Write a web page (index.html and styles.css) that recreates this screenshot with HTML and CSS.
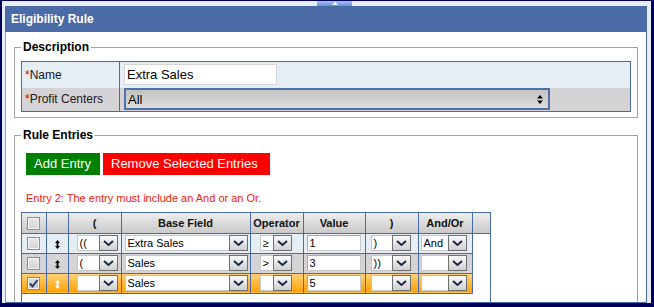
FILE: index.html
```html
<!DOCTYPE html>
<html>
<head>
<meta charset="utf-8">
<link rel="stylesheet" href="styles.css">
</head>
<body>
<div class="frame">
  <div class="topstrip"><div class="tab"><span class="tri"></span></div></div>
  <div class="panel">
    <div class="hdr">Eligibility Rule</div>
    <div class="pbody">
      <fieldset class="fs desc">
        <legend>Description</legend>
        <table class="dt">
          <tr class="r1">
            <td class="lbl"><span class="req">*</span>Name</td>
            <td class="fld"><div class="inp">Extra Sales</div></td>
          </tr>
          <tr class="r2">
            <td class="lbl"><span class="req">*</span>Profit Centers</td>
            <td class="fld"><div class="pc"><span>All</span><svg class="ud" width="6" height="9" viewBox="0 0 6 9"><polygon points="3,0 6,3.5 0,3.5" fill="#000"/><polygon points="0,5.5 6,5.5 3,9" fill="#000"/></svg></div></td>
          </tr>
        </table>
      </fieldset>
      <fieldset class="fs rules">
        <legend>Rule Entries</legend>
        <div class="btns"><span class="btn add">Add Entry</span><span class="btn rem">Remove Selected Entries</span></div>
        <div class="err">Entry 2: The entry must include an And or an Or.</div>
        <div class="rgrid">
        <table class="rt">
          <colgroup>
            <col class="w-chk"><col class="w-drag"><col class="w-lp"><col class="w-fld"><col class="w-op"><col class="w-val"><col class="w-rp"><col class="w-ao"><col class="w-end">
          </colgroup>
          <tr class="th">
            <th><span class="cb"></span></th><th></th><th>(</th><th>Base Field</th><th>Operator</th><th>Value</th><th>)</th><th>And/Or</th><th></th>
          </tr>
          <tr class="r1">
            <td class="c"><span class="cb"></span></td>
            <td class="c"><svg class="drag" width="5" height="9" viewBox="0 0 5 9"><polygon points="2.5,0 5,3 3.4,3 3.4,6 5,6 2.5,9 0,6 1.6,6 1.6,3 0,3" fill="#000"/></svg></td>
            <td><div class="dd lp"><span class="t">((</span><span class="b"><svg width="11" height="6" viewBox="0 0 11 6"><polyline points="1,1 5.5,5 10,1" fill="none" stroke="#1c2a4c" stroke-width="2"/></svg></span></div></td>
            <td><div class="dd fld"><span class="t">Extra Sales</span><span class="b"><svg width="11" height="6" viewBox="0 0 11 6"><polyline points="1,1 5.5,5 10,1" fill="none" stroke="#1c2a4c" stroke-width="2"/></svg></span></div></td>
            <td><div class="dd op"><span class="t">≥</span><span class="b"><svg width="11" height="6" viewBox="0 0 11 6"><polyline points="1,1 5.5,5 10,1" fill="none" stroke="#1c2a4c" stroke-width="2"/></svg></span></div></td>
            <td><div class="vi">1</div></td>
            <td><div class="dd rp"><span class="t">)</span><span class="b"><svg width="11" height="6" viewBox="0 0 11 6"><polyline points="1,1 5.5,5 10,1" fill="none" stroke="#1c2a4c" stroke-width="2"/></svg></span></div></td>
            <td><div class="dd ao"><span class="t">And</span><span class="b"><svg width="11" height="6" viewBox="0 0 11 6"><polyline points="1,1 5.5,5 10,1" fill="none" stroke="#1c2a4c" stroke-width="2"/></svg></span></div></td>
            <td class="blank"></td>
          </tr>
          <tr class="r2">
            <td class="c"><span class="cb"></span></td>
            <td class="c"><svg class="drag" width="5" height="9" viewBox="0 0 5 9"><polygon points="2.5,0 5,3 3.4,3 3.4,6 5,6 2.5,9 0,6 1.6,6 1.6,3 0,3" fill="#000"/></svg></td>
            <td><div class="dd lp"><span class="t">(</span><span class="b"><svg width="11" height="6" viewBox="0 0 11 6"><polyline points="1,1 5.5,5 10,1" fill="none" stroke="#1c2a4c" stroke-width="2"/></svg></span></div></td>
            <td><div class="dd fld"><span class="t">Sales</span><span class="b"><svg width="11" height="6" viewBox="0 0 11 6"><polyline points="1,1 5.5,5 10,1" fill="none" stroke="#1c2a4c" stroke-width="2"/></svg></span></div></td>
            <td><div class="dd op"><span class="t">&gt;</span><span class="b"><svg width="11" height="6" viewBox="0 0 11 6"><polyline points="1,1 5.5,5 10,1" fill="none" stroke="#1c2a4c" stroke-width="2"/></svg></span></div></td>
            <td><div class="vi">3</div></td>
            <td><div class="dd rp"><span class="t">))</span><span class="b"><svg width="11" height="6" viewBox="0 0 11 6"><polyline points="1,1 5.5,5 10,1" fill="none" stroke="#1c2a4c" stroke-width="2"/></svg></span></div></td>
            <td><div class="dd ao"><span class="t"></span><span class="b"><svg width="11" height="6" viewBox="0 0 11 6"><polyline points="1,1 5.5,5 10,1" fill="none" stroke="#1c2a4c" stroke-width="2"/></svg></span></div></td>
            <td class="blank"></td>
          </tr>
          <tr class="r3">
            <td class="c"><span class="cb on"><svg width="11" height="11" viewBox="0 0 11 11"><polyline points="2,5.5 4.5,8.5 9.5,2" fill="none" stroke="#2a3a6e" stroke-width="2"/></svg></span></td>
            <td class="c"><svg class="drag" width="5" height="9" viewBox="0 0 5 9"><polygon points="2.5,0 5,3 3.4,3 3.4,6 5,6 2.5,9 0,6 1.6,6 1.6,3 0,3" fill="#fff"/></svg></td>
            <td><div class="dd lp"><span class="t"></span><span class="b"><svg width="11" height="6" viewBox="0 0 11 6"><polyline points="1,1 5.5,5 10,1" fill="none" stroke="#1c2a4c" stroke-width="2"/></svg></span></div></td>
            <td><div class="dd fld"><span class="t">Sales</span><span class="b"><svg width="11" height="6" viewBox="0 0 11 6"><polyline points="1,1 5.5,5 10,1" fill="none" stroke="#1c2a4c" stroke-width="2"/></svg></span></div></td>
            <td><div class="dd op"><span class="t"></span><span class="b"><svg width="11" height="6" viewBox="0 0 11 6"><polyline points="1,1 5.5,5 10,1" fill="none" stroke="#1c2a4c" stroke-width="2"/></svg></span></div></td>
            <td><div class="vi">5</div></td>
            <td><div class="dd rp"><span class="t"></span><span class="b"><svg width="11" height="6" viewBox="0 0 11 6"><polyline points="1,1 5.5,5 10,1" fill="none" stroke="#1c2a4c" stroke-width="2"/></svg></span></div></td>
            <td><div class="dd ao"><span class="t"></span><span class="b"><svg width="11" height="6" viewBox="0 0 11 6"><polyline points="1,1 5.5,5 10,1" fill="none" stroke="#1c2a4c" stroke-width="2"/></svg></span></div></td>
            <td class="blank"></td>
          </tr>
        </table>
        </div>
      </fieldset>
    </div>
  </div>
</div>
</body>
</html>
```
FILE: styles.css
```css
* { box-sizing: border-box; }
html, body { margin: 0; padding: 0; }
body {
  font-family: "Liberation Sans", Arial, sans-serif;
  width: 654px;
  height: 307px;
  overflow: hidden;
  color: #000;
}
.frame {
  height: 307px;
  border-style: solid;
  border-color: #00005a;
  border-width: 1px 3px 4px 2px;
  background: #e8eef8;
  display: flex;
  flex-direction: column;
}
.topstrip { height: 5px; flex: none; display: flex; }
.tab {
  margin-left: 315px;
  width: 35px;
  height: 5px;
  background: linear-gradient(#a4c2f4, #6890dc);
  display: flex;
  justify-content: center;
  align-items: center;
}
.tri {
  width: 0; height: 0;
  border-left: 3px solid transparent;
  border-right: 3px solid transparent;
  border-bottom: 3px solid #fff;
}
.panel {
  flex: 1;
  min-height: 0;
  margin: 0 4px 0 3px;
  display: flex;
  flex-direction: column;
}
.hdr {
  height: 26px;
  flex: none;
  background: #4a6ba5;
  color: #fff;
  font-weight: bold;
  font-size: 12px;
  line-height: 26px;
  padding-left: 6px;
}
.pbody {
  flex: 1;
  min-height: 0;
  overflow: hidden;
  background: #fff;
  border: 1px solid #4a6ba5;
  border-top: 0;
  border-left-color: #8aa3cf;
  padding: 8px 8px 0;
}
.fs {
  margin: 0;
  border: 1px solid #a3a3a3;
  padding: 7px 6px 5px;
  min-width: 0;
}
.fs legend {
  padding: 0 2px;
  font-size: 12px;
  font-weight: bold;
  line-height: 14px;
}
.dt {
  width: 100%;
  border-collapse: collapse;
  border: 1px solid #4a6ba5;
}
.dt td { padding: 0; }
.dt .lbl {
  width: 98px;
  border-right: 1px solid #4a6ba5;
  padding-left: 3px;
  font-size: 12px;
  color: #1a1a1a;
}
.req { color: #e00000; }
.dt .r1 td { height: 26px; background: #e5edf5; }
.dt .r2 td { height: 24px; background: #d5d3d5; }
.inp {
  width: 153px;
  height: 21px;
  margin-left: 4px;
  border: 1px solid #d6d6d6;
  background: #fff;
  font-size: 13px;
  line-height: 19px;
  padding-left: 2px;
}
.pc {
  width: 426px;
  height: 22px;
  margin-left: 4px;
  border: 2px solid #5271ab;
  background: linear-gradient(#c3c3c3, #dcdcdc);
  font-size: 13px;
  padding: 0 5px 0 2px;
  display: flex;
  justify-content: space-between;
  align-items: center;
}
.rules { margin-top: 10px; padding: 11px 6px 5px; }
.btns { display: flex; gap: 3px; padding-left: 5px; }
.btn {
  height: 22px;
  line-height: 22px;
  padding: 0 8px;
  color: #fff;
  font-size: 13px;
}
.add { background: #008000; width: 74px; }
.rem { background: #ff0000; width: 167px; }
.err {
  margin-top: 17px;
  font-size: 11px;
  line-height: 13px;
  color: #f41a0a;
  padding-left: 5px;
}
.rgrid {
  margin-top: 7px;
  width: 470px;
  height: 110px;
  border: 1px solid #4a6ba5;
  background: #fff;
}
.rt {
  border-collapse: collapse;
  table-layout: fixed;
  width: 468px;
  font-size: 11px;
}
.w-chk { width: 24px; }
.w-drag { width: 22px; }
.w-lp { width: 53px; }
.w-fld { width: 129px; }
.w-op { width: 53px; }
.w-val { width: 62px; }
.w-rp { width: 53px; }
.w-ao { width: 54px; }
.w-end { width: 18px; }
.rt th, .rt td {
  border: 1px solid #4a6ba5;
  padding: 0;
  height: 20px;
  vertical-align: middle;
}
.rt tr > :first-child { border-left: 0; }
.rt tr > :last-child { border-right: 0; }
.rt .th > * { border-top: 0; }
.rt th {
  background: linear-gradient(#ededed, #c9c9c9);
  font-weight: bold;
  text-align: center;
  color: #111;
}
.rt .r1 td { background: #e5edf5; }
.rt .r2 td { background: #d5d3d5; }
.rt .r3 td { background: linear-gradient(#ffd27c, #ffa000); }
.rt td.blank {
  background: #fff;
  border-top: 0;
  border-bottom: 0;
}
.rt .c { text-align: center; }
.cb {
  display: inline-block;
  width: 13px;
  height: 13px;
  border: 1px solid #8e8e8e;
  background: linear-gradient(#e8e8e8, #d2d2d2);
  box-shadow: inset 0 0 0 1px #f4f4f4;
  vertical-align: middle;
}
.cb.on {
  border-color: #38a8dc;
  background: linear-gradient(#dcdcdc, #c8c8c8);
  display: inline-flex;
  align-items: center;
  justify-content: center;
}
.drag { display: inline-block; vertical-align: middle; }
.dd {
  display: flex;
  height: 16px;
  border: 1px solid #c6c6c6;
  background: #fff;
}
.dd .t {
  flex: 1;
  padding-left: 2px;
  line-height: 14px;
  font-size: 11px;
  white-space: nowrap;
  overflow: hidden;
}
.dd .b {
  width: 19px;
  flex: none;
  margin: -1px -1px -1px 0;
  border: 1px solid #6f6f6f;
  background: linear-gradient(#fafafa, #d0d0d0);
  display: flex;
  align-items: center;
  justify-content: center;
}
.dd.lp { width: 41px; margin-left: 8px; }
.dd.fld { width: 123px; margin-left: 3px; }
.dd.op { width: 32px; margin-left: 9px; }
.dd.rp { width: 40px; margin-left: 5px; }
.dd.ao { width: 46px; margin-left: 2px; }
.vi {
  width: 54px;
  height: 16px;
  margin-left: 3px;
  border: 1px solid #c8c8c8;
  border-top-color: #a8a8a8;
  border-left-color: #a8a8a8;
  background: #fff;
  padding-left: 2px;
  font-size: 11px;
  line-height: 14px;
}
```
